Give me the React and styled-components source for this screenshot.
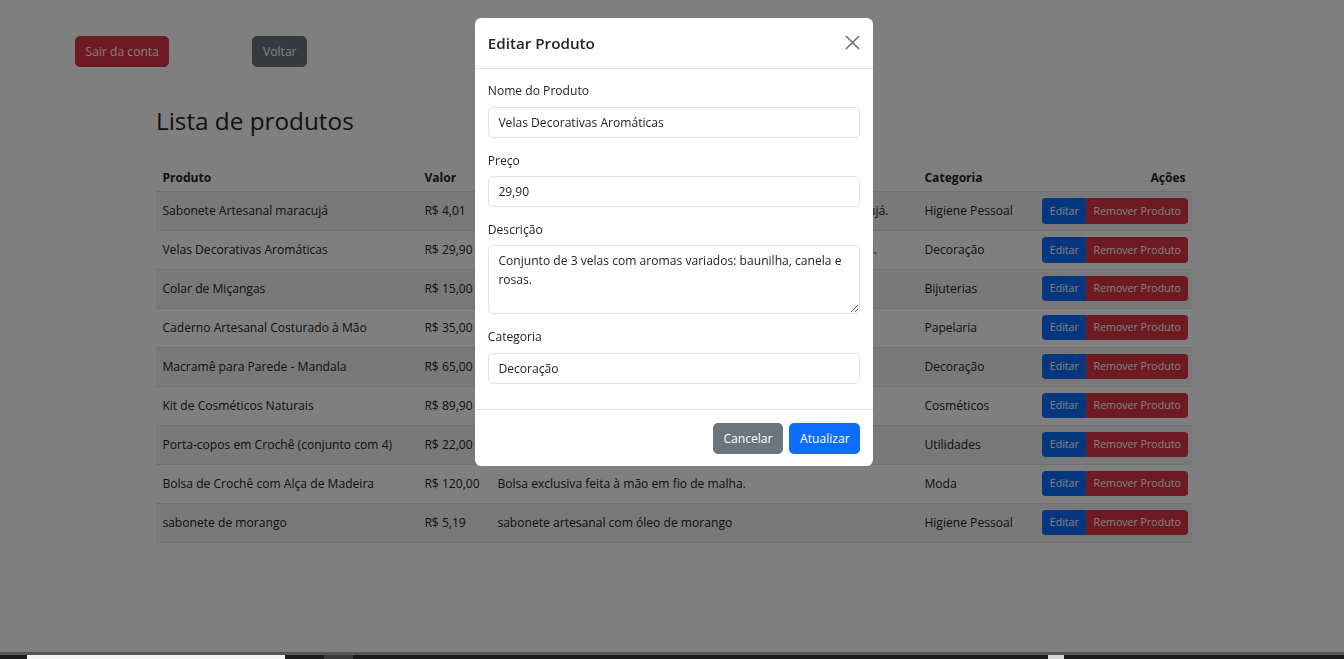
import React from "react";
import styled, { createGlobalStyle, css } from "styled-components";

const GlobalStyle = createGlobalStyle`
  html, body {
    margin: 0;
    padding: 0;
    background: #fff;
  }
  body {
    font-family: "Segoe UI", "Open Sans", "Noto Sans", sans-serif;
    font-size: 12.1px;
    line-height: 19.2px;
    color: #212529;
  }
  * {
    box-sizing: border-box;
  }
`;

const produtos = [
  { nome: "Sabonete Artesanal maracujá", valor: "R$ 4,01", desc: "Sabonete artesanal feito à mão com glicerina e essência de maracujá.", cat: "Higiene Pessoal" },
  { nome: "Velas Decorativas Aromáticas", valor: "R$ 29,90", desc: "Conjunto de 3 velas com aromas variados: baunilha, canela e rosas.", cat: "Decoração" },
  { nome: "Colar de Miçangas", valor: "R$ 15,00", desc: "Colar colorido feito com miçangas.", cat: "Bijuterias" },
  { nome: "Caderno Artesanal Costurado à Mão", valor: "R$ 35,00", desc: "Caderno com capa de tecido e folhas recicladas.", cat: "Papelaria" },
  { nome: "Macramê para Parede - Mandala", valor: "R$ 65,00", desc: "Peça decorativa em macramê.", cat: "Decoração" },
  { nome: "Kit de Cosméticos Naturais", valor: "R$ 89,90", desc: "Kit com hidratante, óleo e sabonete.", cat: "Cosméticos" },
  { nome: "Porta-copos em Crochê (conjunto com 4)", valor: "R$ 22,00", desc: "Porta-copos coloridos em crochê.", cat: "Utilidades" },
  { nome: "Bolsa de Crochê com Alça de Madeira", valor: "R$ 120,00", desc: "Bolsa exclusiva feita à mão em fio de malha.", cat: "Moda" },
  { nome: "sabonete de morango", valor: "R$ 5,19", desc: "sabonete artesanal com óleo de morango", cat: "Higiene Pessoal" },
];

const Page = styled.div`
  min-height: 659px;
`;

const TopBar = styled.div`
  display: flex;
  gap: 83px;
  padding: 36px 0 0 75px;
`;

const variants = {
  danger: css`background: #dc3545; border-color: #dc3545;`,
  secondary: css`background: #6c757d; border-color: #6c757d;`,
  primary: css`background: #0d6efd; border-color: #0d6efd;`,
};

const Button = styled.button`
  font-family: inherit;
  font-size: ${(p) => (p.$small ? "10.6px" : "12.1px")};
  line-height: ${(p) => (p.$small ? "16.8px" : "19.2px")};
  padding: ${(p) => (p.$small ? "3.2px 6.4px" : "4.8px 9.6px")};
  border: 0.8px solid transparent;
  border-radius: ${(p) => (p.$small ? "3.2px" : "4.8px")};
  color: #fff;
  cursor: pointer;
  ${(p) => variants[p.$variant]}
`;

const Content = styled.div`
  width: 1036px;
  margin-left: 156px;
`;

const Title = styled.h2`
  font-size: 24.3px;
  font-weight: 500;
  line-height: 30.7px;
  margin: 39px 0 0;
`;

const Table = styled.table`
  width: 100%;
  table-layout: fixed;
  border-collapse: collapse;
  margin-top: 21px;
  th, td {
    padding: 6.4px;
    border-bottom: 0.8px solid #dee2e6;
    vertical-align: middle;
    text-align: left;
    white-space: nowrap;
  }
  th {
    font-weight: 700;
    padding-top: 10px;
    padding-bottom: 4.3px;
  }
  tbody tr:nth-child(odd) td {
    background: rgba(0, 0, 0, 0.05);
  }
`;

const ActionsCell = styled.td`
  && {
    text-align: right;
  }
`;

const ActionsHead = styled.th`
  && {
    text-align: right;
  }
`;

const BtnGroup = styled.div`
  display: inline-flex;
  ${Button}:first-child {
    border-top-right-radius: 0;
    border-bottom-right-radius: 0;
  }
  ${Button}:last-child {
    border-top-left-radius: 0;
    border-bottom-left-radius: 0;
  }
`;

const Backdrop = styled.div`
  position: fixed;
  inset: 0;
  background: rgba(0, 0, 0, 0.5);
`;

const ModalWrap = styled.div`
  position: fixed;
  inset: 0;
  display: flex;
  justify-content: center;
  align-items: flex-start;
  padding: 18px 0 0 4px;
`;

const Modal = styled.div`
  width: 398px;
  background: #fff;
  border-radius: 6.4px;
  overflow: hidden;
`;

const ModalHeader = styled.div`
  display: flex;
  align-items: center;
  justify-content: space-between;
  padding: 12.8px;
  border-bottom: 0.8px solid #dee2e6;
`;

const ModalTitle = styled.h5`
  margin: 0;
  font-size: 15.2px;
  font-weight: 600;
  line-height: 24px;
`;

const Close = styled.button`
  background: none;
  border: 0;
  padding: 0;
  width: 16px;
  height: 16px;
  display: flex;
  align-items: center;
  justify-content: center;
  cursor: pointer;
`;

const ModalBody = styled.div`
  padding: 12.8px;
`;

const Field = styled.div`
  margin-bottom: 12.8px;
`;

const Label = styled.label`
  display: block;
  margin-bottom: 6.4px;
`;

const inputBase = css`
  display: block;
  width: 100%;
  font-family: inherit;
  font-size: 12.1px;
  line-height: 19.2px;
  color: #212529;
  padding: 4.8px 9.6px;
  border: 0.8px solid #dee2e6;
  border-radius: 4.8px;
  background: #fff;
  outline: none;
`;

const Input = styled.input`
  ${inputBase}
`;

const TextArea = styled.textarea`
  ${inputBase}
  height: 69px;
  resize: vertical;
`;

const ModalFooter = styled.div`
  display: flex;
  justify-content: flex-end;
  gap: 6.4px;
  padding: 12.8px;
  border-top: 0.8px solid #dee2e6;
`;

const BottomStrip = styled.div`
  position: fixed;
  left: 0;
  right: 0;
  bottom: 0;
  height: 7px;
  background: #1c1c1c;
  border-top: 3px solid #575757;
  display: flex;
`;

const StripSeg = styled.div`
  width: ${(p) => p.$w}px;
  margin-left: ${(p) => p.$l}px;
  background: ${(p) => p.$c};
`;

export default function App() {
  return (
    <Page>
      <GlobalStyle />
      <TopBar>
        <Button $variant="danger">Sair da conta</Button>
        <Button $variant="secondary">Voltar</Button>
      </TopBar>
      <Content>
        <Title>Lista de produtos</Title>
        <Table>
          <colgroup>
            <col style={{ width: 262 }} />
            <col style={{ width: 73 }} />
            <col style={{ width: 427 }} />
            <col style={{ width: 118 }} />
            <col style={{ width: 156 }} />
          </colgroup>
          <thead>
            <tr>
              <th>Produto</th>
              <th>Valor</th>
              <th>Descrição</th>
              <th>Categoria</th>
              <ActionsHead>Ações</ActionsHead>
            </tr>
          </thead>
          <tbody>
            {produtos.map((p) => (
              <tr key={p.nome}>
                <td>{p.nome}</td>
                <td>{p.valor}</td>
                <td>{p.desc}</td>
                <td>{p.cat}</td>
                <ActionsCell>
                  <BtnGroup>
                    <Button $small $variant="primary">Editar</Button>
                    <Button $small $variant="danger">Remover Produto</Button>
                  </BtnGroup>
                </ActionsCell>
              </tr>
            ))}
          </tbody>
        </Table>
      </Content>

      <Backdrop />
      <ModalWrap>
        <Modal>
          <ModalHeader>
            <ModalTitle>Editar Produto</ModalTitle>
            <Close aria-label="Fechar">
              <svg width="15" height="15" viewBox="0 0 16 16">
                <path d="M1 1L15 15M15 1L1 15" stroke="#6b6b6b" strokeWidth="1.6" fill="none" />
              </svg>
            </Close>
          </ModalHeader>
          <ModalBody>
            <Field>
              <Label>Nome do Produto</Label>
              <Input defaultValue="Velas Decorativas Aromáticas" />
            </Field>
            <Field>
              <Label>Preço</Label>
              <Input defaultValue="29,90" />
            </Field>
            <Field>
              <Label>Descrição</Label>
              <TextArea defaultValue="Conjunto de 3 velas com aromas variados: baunilha, canela e rosas." />
            </Field>
            <Field>
              <Label>Categoria</Label>
              <Input defaultValue="Decoração" />
            </Field>
          </ModalBody>
          <ModalFooter>
            <Button $variant="secondary">Cancelar</Button>
            <Button $variant="primary">Atualizar</Button>
          </ModalFooter>
        </Modal>
      </ModalWrap>

      <BottomStrip>
        <StripSeg $l={27} $w={258} $c="#f4f4f4" />
        <StripSeg $l={39} $w={29} $c="#3a3a3a" />
        <StripSeg $l={695} $w={16} $c="#d8d8d8" />
      </BottomStrip>
    </Page>
  );
}
